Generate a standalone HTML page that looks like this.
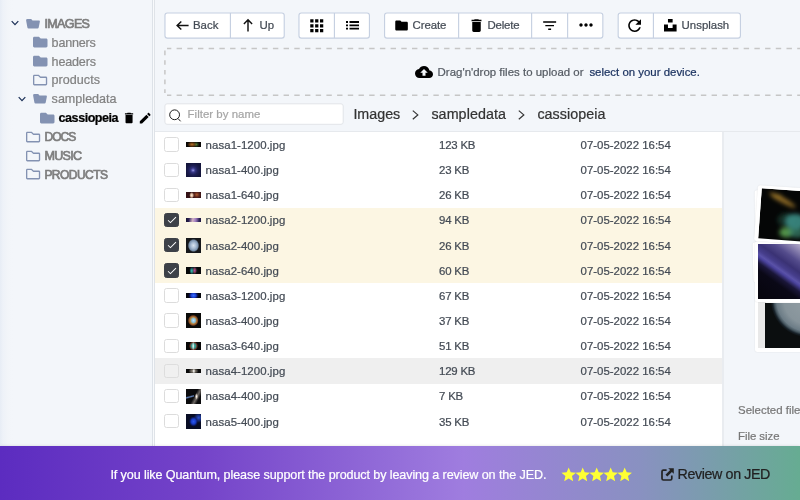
<!DOCTYPE html>
<html lang="en">
<head>
<meta charset="utf-8">
<title>Quantum Manager</title>
<style>
*{box-sizing:border-box;margin:0;padding:0}
html,body{width:800px;height:500px;overflow:hidden}
body{position:relative;background:#f3f6fa;font-family:"Liberation Sans",Arial,sans-serif;font-size:11.43px;color:#444b55}
.t{position:absolute;white-space:pre;line-height:20px;height:20px;-webkit-text-stroke:.22px}
svg{position:absolute;display:block;overflow:visible}
#root{position:absolute;left:0;top:0;width:800px;height:500px;will-change:transform}
#side{position:absolute;left:0;top:0;width:152.4px;height:446px;background:linear-gradient(90deg,#e7edf5 0,#eef2f8 3px,#f2f5f9 8px,#f3f6fa 13px)}
#split1{position:absolute;left:152.4px;top:0;width:2.6px;height:446px;background:#f8fafc;border-left:1px solid #dde2e8;border-right:.6px solid #dfe3e8}
.sl{color:#828282}
.sl.top{color:#7e7e7e;-webkit-text-stroke:.7px #7e7e7e}
.grp{position:absolute;top:12.4px;height:26px;background:#fff;border:1px solid #c6d0e1;border-radius:3px}
.sep{position:absolute;top:12.4px;width:1px;height:26px;background:#c6d0e1}
#list{position:absolute;left:155px;top:131px;width:567.4px;height:315px;background:#fff;border-top:1px solid #e8ebee}
.row{position:absolute;left:155px;width:567.4px;height:25.143px}
.row.sel{background:#fcf6e3}
.row.hov{background:#efefef}
.cb{position:absolute;left:9.4px;top:5.3px;width:14.3px;height:14.3px;border:1px solid #dcdcdc;border-radius:2.5px;background:#fff}
.sel .cb{background:#3d4148;border-color:#3d4148}
.hov .cb{background:#f0f0f0;border-color:#dddddd}
.th{position:absolute;left:31px;width:15px;overflow:hidden}
.th.w{top:10.1px;height:4.7px}
.th.s{top:5.2px;height:14.7px}
.row .t{top:2.85px}
.fn{left:50.6px;letter-spacing:.07px}
.fz{left:284px;letter-spacing:-.2px}
.fd{left:425.6px}
#split2{position:absolute;left:722.4px;top:132px;width:1.4px;height:314px;background:#e9ecf0}
#hline{position:absolute;left:155px;top:131px;width:645px;height:1px;background:#e6e9ed}
#banner{position:absolute;left:0;top:446px;width:800px;height:54px;background:linear-gradient(90deg,#5c2cc0 0%,#7443c9 25%,#9f7ddf 58%,#8991c1 80%,#66ac92 100%);box-shadow:0 0 3px rgba(0,0,0,.13)}
.card{position:absolute;background:#fff;border-radius:2px;box-shadow:0 0 1.5px rgba(0,0,0,.12)}
.card i{position:absolute;display:block}
</style>
</head>
<body>
<div id="root">
<div id="side"></div><div id="split1"></div>
<svg style="left:26px;top:18.7px" width="14" height="9.4" viewBox="0 0 14 9.4"><path fill="#8392b2" d="M1.5 0 H5.2 L6.5 1.5 H13 Q14.1 1.5 13.9 2.6 L12.7 8.4 Q12.5 9.4 11.5 9.4 H2.6 Q1.6 9.4 1.4 8.4 L.1 1.4 Q-.1 0 1.5 0Z"/></svg>
<svg style="left:11.2px;top:20.3px" width="8" height="6" viewBox="0 0 8 6"><path d="M.7 1.1 L4 4.7 L7.3 1.1" fill="none" stroke="#1c3158" stroke-width="1.2"/></svg>
<div class="t sl top" style="left:44.4px;top:13.84px;font-size:12.57px;;letter-spacing:-0.655px;">IMAGES</div>
<svg style="left:33px;top:35.36px" width="14.5" height="14.2" viewBox="0 0 512 512" preserveAspectRatio="none"><path fill="#8392b2" d="M464 128H272l-64-64H48C21.49 64 0 85.49 0 112v288c0 26.51 21.49 48 48 48h416c26.51 0 48-21.49 48-48V176c0-26.51-21.49-48-48-48z"/></svg>
<div class="t sl" style="left:51.6px;top:32.70px;font-size:12.57px;;letter-spacing:-0.201px;">banners</div>
<svg style="left:33px;top:54.21px" width="14.5" height="14.2" viewBox="0 0 512 512" preserveAspectRatio="none"><path fill="#8392b2" d="M464 128H272l-64-64H48C21.49 64 0 85.49 0 112v288c0 26.51 21.49 48 48 48h416c26.51 0 48-21.49 48-48V176c0-26.51-21.49-48-48-48z"/></svg>
<div class="t sl" style="left:51.6px;top:51.56px;font-size:12.57px;;letter-spacing:-0.168px;">headers</div>
<svg style="left:33px;top:73.07px" width="14.2" height="14.2" viewBox="0 0 512 512" preserveAspectRatio="none"><path fill="#8392b2" d="M464 128H272l-54.63-54.63c-6-6-14.14-9.37-22.63-9.37H48C21.49 64 0 85.49 0 112v288c0 26.51 21.49 48 48 48h416c26.51 0 48-21.49 48-48V176c0-26.51-21.49-48-48-48zm0 272H48V112h140.12l54.63 54.63c6 6 14.14 9.37 22.63 9.37H464v224z"/></svg>
<div class="t sl" style="left:51.6px;top:70.42px;font-size:12.57px;;letter-spacing:0.030px;">products</div>
<svg style="left:33px;top:94.13px" width="14" height="9.4" viewBox="0 0 14 9.4"><path fill="#8392b2" d="M1.5 0 H5.2 L6.5 1.5 H13 Q14.1 1.5 13.9 2.6 L12.7 8.4 Q12.5 9.4 11.5 9.4 H2.6 Q1.6 9.4 1.4 8.4 L.1 1.4 Q-.1 0 1.5 0Z"/></svg>
<svg style="left:18.4px;top:95.72800000000001px" width="8" height="6" viewBox="0 0 8 6"><path d="M.7 1.1 L4 4.7 L7.3 1.1" fill="none" stroke="#1c3158" stroke-width="1.2"/></svg>
<div class="t sl" style="left:51.6px;top:89.27px;font-size:12.57px;;letter-spacing:0.005px;">sampledata</div>
<svg style="left:40px;top:110.79px" width="14.5" height="14.2" viewBox="0 0 512 512" preserveAspectRatio="none"><path fill="#8392b2" d="M464 128H272l-64-64H48C21.49 64 0 85.49 0 112v288c0 26.51 21.49 48 48 48h416c26.51 0 48-21.49 48-48V176c0-26.51-21.49-48-48-48z"/></svg>
<div class="t " style="left:58.6px;top:108.13px;font-size:12.57px;font-weight:bold;color:#000;letter-spacing:-0.472px;">cassiopeia</div>
<svg style="left:26px;top:129.64px" width="14.2" height="14.2" viewBox="0 0 512 512" preserveAspectRatio="none"><path fill="#8392b2" d="M464 128H272l-54.63-54.63c-6-6-14.14-9.37-22.63-9.37H48C21.49 64 0 85.49 0 112v288c0 26.51 21.49 48 48 48h416c26.51 0 48-21.49 48-48V176c0-26.51-21.49-48-48-48zm0 272H48V112h140.12l54.63 54.63c6 6 14.14 9.37 22.63 9.37H464v224z"/></svg>
<div class="t sl top" style="left:44.4px;top:127.16px;font-size:12.067px;;letter-spacing:-0.938px;">DOCS</div>
<svg style="left:26px;top:148.5px" width="14.2" height="14.2" viewBox="0 0 512 512" preserveAspectRatio="none"><path fill="#8392b2" d="M464 128H272l-54.63-54.63c-6-6-14.14-9.37-22.63-9.37H48C21.49 64 0 85.49 0 112v288c0 26.51 21.49 48 48 48h416c26.51 0 48-21.49 48-48V176c0-26.51-21.49-48-48-48zm0 272H48V112h140.12l54.63 54.63c6 6 14.14 9.37 22.63 9.37H464v224z"/></svg>
<div class="t sl top" style="left:44.4px;top:145.84px;font-size:12.57px;;letter-spacing:-0.721px;">MUSIC</div>
<svg style="left:26px;top:167.36px" width="14.2" height="14.2" viewBox="0 0 512 512" preserveAspectRatio="none"><path fill="#8392b2" d="M464 128H272l-54.63-54.63c-6-6-14.14-9.37-22.63-9.37H48C21.49 64 0 85.49 0 112v288c0 26.51 21.49 48 48 48h416c26.51 0 48-21.49 48-48V176c0-26.51-21.49-48-48-48zm0 272H48V112h140.12l54.63 54.63c6 6 14.14 9.37 22.63 9.37H464v224z"/></svg>
<div class="t sl top" style="left:44.4px;top:164.87px;font-size:12.067px;;letter-spacing:-0.573px;">PRODUCTS</div>
<svg style="left:121.65px;top:110.94px" width="14.1" height="14.1" viewBox="0 0 24 24" ><path fill="#000" d="M6 19c0 1.1.9 2 2 2h8c1.1 0 2-.9 2-2V7H6v12zM19 4h-3.5l-1-1h-5l-1 1H5v2h14V4z"/></svg>
<svg style="left:137.8px;top:110.69px" width="14.4" height="14.4" viewBox="0 0 24 24" ><path fill="#000" d="M3 17.25V21h3.75L17.81 9.94l-3.75-3.75L3 17.25zM20.71 7.04c.39-.39.39-1.02 0-1.41l-2.34-2.34c-.39-.39-1.02-.39-1.41 0l-1.83 1.83 3.75 3.75 1.83-1.83z"/></svg>
<svg style="left:0;top:0" width="800" height="45"><rect x="164.97" y="12.97" width="119.26" height="25.1" rx="2.4" fill="#fff" stroke="#c6d0e1" stroke-width="1.14"/></svg>
<svg style="left:0;top:0" width="800" height="45"><path d="M230.42 12.97 V38.07" fill="none" stroke="#c6d0e1" stroke-width="1.14"/></svg>
<svg style="left:0;top:0" width="800" height="45"><rect x="298.97" y="12.97" width="70.46" height="25.1" rx="2.4" fill="#fff" stroke="#c6d0e1" stroke-width="1.14"/></svg>
<svg style="left:0;top:0" width="800" height="45"><path d="M334.42 12.97 V38.07" fill="none" stroke="#c6d0e1" stroke-width="1.14"/></svg>
<svg style="left:0;top:0" width="800" height="45"><rect x="384.57" y="12.97" width="218.26" height="25.1" rx="2.4" fill="#fff" stroke="#c6d0e1" stroke-width="1.14"/></svg>
<svg style="left:0;top:0" width="800" height="45"><path d="M458.62 12.97 V38.07" fill="none" stroke="#c6d0e1" stroke-width="1.14"/></svg>
<svg style="left:0;top:0" width="800" height="45"><path d="M531.62 12.97 V38.07" fill="none" stroke="#c6d0e1" stroke-width="1.14"/></svg>
<svg style="left:0;top:0" width="800" height="45"><path d="M567.62 12.97 V38.07" fill="none" stroke="#c6d0e1" stroke-width="1.14"/></svg>
<svg style="left:0;top:0" width="800" height="45"><rect x="618.17" y="12.97" width="122.26" height="25.1" rx="2.4" fill="#fff" stroke="#c6d0e1" stroke-width="1.14"/></svg>
<svg style="left:0;top:0" width="800" height="45"><path d="M653.42 12.97 V38.07" fill="none" stroke="#c6d0e1" stroke-width="1.14"/></svg>
<svg style="left:0;top:0" width="800" height="45"><path d="M188.6 25.5 H177.2 M181.3 21.4 L177.1 25.5 L181.3 29.6" fill="none" stroke="#111" stroke-width="1.45"/></svg>
<div class="t " style="left:193px;top:15.04px;font-size:11.43px;;">Back</div>
<svg style="left:0;top:0" width="800" height="45"><path d="M248 31.4 V19.9 M243.9 24 L248 19.8 L252.1 24" fill="none" stroke="#111" stroke-width="1.45"/></svg>
<div class="t " style="left:259.6px;top:15.04px;font-size:11.43px;;">Up</div>
<svg style="left:306.75px;top:15.55px" width="19.5" height="19.5" viewBox="0 0 24 24" ><path fill="#000" d="M4 8h4V4H4v4zm6 12h4v-4h-4v4zm-6 0h4v-4H4v4zm0-6h4v-4H4v4zm6 0h4v-4h-4v4zm6-10v4h4V4h-4zm-6 4h4V4h-4v4zm6 6h4v-4h-4v4zm0 6h4v-4h-4v4z"/></svg>
<svg style="left:0;top:0" width="800" height="45"><path d="M346 21.1h2v1.8h-2zM346 24.45h2v1.8h-2zM346 27.8h2v1.8h-2zM349.5 21.1h9.5v1.8h-9.5zM349.5 24.45h9.5v1.8h-9.5zM349.5 27.8h9.5v1.8h-9.5z" fill="#000"/></svg>
<svg style="left:394.15px;top:17.65px" width="15.1" height="15.1" viewBox="0 0 24 24" ><path fill="#000" d="M10 4H4c-1.1 0-1.99.9-1.99 2L2 18c0 1.1.9 2 2 2h16c1.1 0 2-.9 2-2V8c0-1.1-.9-2-2-2h-8l-2-2z"/></svg>
<div class="t " style="left:412.6px;top:15.04px;font-size:11.43px;letter-spacing:-.08px;">Create</div>
<svg style="left:468.0px;top:16.7px" width="17" height="17" viewBox="0 0 24 24" ><path fill="#000" d="M6 19c0 1.1.9 2 2 2h8c1.1 0 2-.9 2-2V7H6v12zM19 4h-3.5l-1-1h-5l-1 1H5v2h14V4z"/></svg>
<div class="t " style="left:487.4px;top:15.04px;font-size:11.43px;letter-spacing:-.14px;">Delete</div>
<svg style="left:540.85px;top:16.55px" width="17.3" height="17.3" viewBox="0 0 24 24" ><path fill="#000" d="M10 18h4v-2h-4v2zM3 6v2h18V6H3zm3 7h12v-2H6v2z"/></svg>
<svg style="left:575.7px;top:15.1px" width="20" height="20" viewBox="0 0 24 24" ><path fill="#000" d="M6 10c-1.1 0-2 .9-2 2s.9 2 2 2 2-.9 2-2-.9-2-2-2zm12 0c-1.1 0-2 .9-2 2s.9 2 2 2 2-.9 2-2-.9-2-2-2zm-6 0c-1.1 0-2 .9-2 2s.9 2 2 2 2-.9 2-2-.9-2-2-2z"/></svg>
<svg style="left:625.4px;top:15.5px" width="19.2" height="19.2" viewBox="0 0 24 24" ><path fill="#000" d="M17.65 6.35C16.2 4.9 14.21 4 12 4c-4.42 0-7.99 3.58-7.99 8s3.57 8 7.99 8c3.73 0 6.84-2.55 7.73-6h-2.08c-.82 2.33-3.04 4-5.65 4-3.31 0-6-2.69-6-6s2.69-6 6-6c1.66 0 3.14.69 4.22 1.78L13 11h7V4l-2.35 2.35z"/></svg>
<svg style="left:664.4px;top:18.1px" width="12.6" height="14.4" viewBox="0 0 448 512" ><path fill="#000" d="M448 230.17V480H0V230.17h141.13V355.09H306.87V230.17zM306.87 32H141.13V156.91H306.87z"/></svg>
<div class="t " style="left:681.6px;top:15.04px;font-size:11.43px;;">Unsplash</div>
<svg style="left:0;top:0" width="800" height="100"><g fill="none" stroke="#c6c6c6" stroke-width="1.5"><path d="M167 48.5 H800 M167 95.2 H800" stroke-dasharray="5.4 5.3" stroke-dashoffset="1.1"/><path d="M164.9 50.6 V93" stroke-dasharray="4.6 5.06"/></g></svg>
<svg style="left:415.2px;top:62.9px" width="18" height="18" viewBox="0 0 24 24" ><path fill="#000" d="M19.35 10.04C18.67 6.59 15.64 4 12 4 9.11 4 6.6 5.64 5.35 8.04 2.34 8.36 0 10.91 0 14c0 3.31 2.69 6 6 6h13c2.76 0 5-2.24 5-5 0-2.64-2.05-4.78-4.65-4.96zM14 13v4h-4v-4H7l5-5 5 5h-3z"/></svg>
<div class="t " style="left:437.6px;top:62.04px;font-size:11.43px;color:#555b63;letter-spacing:.02px;">Drag'n'drop files to upload or</div>
<div class="t " style="left:589.4px;top:62.04px;font-size:11.43px;color:#1d3461;">select on your device.</div>
<svg style="left:0;top:0" width="800" height="130"><rect x="164.9" y="103.8" width="178.3" height="20.5" rx="2.2" fill="#fff" stroke="#e1e4e8" stroke-width="1"/></svg>
<svg style="left:168.6px;top:109px" width="13" height="13" viewBox="0 0 13 13"><circle cx="5.6" cy="5.8" r="4.9" fill="none" stroke="#111" stroke-width=".95"/><path d="M9.1 9.6 L11.6 12.3" stroke="#111" stroke-width=".95" fill="none"/></svg>
<div class="t " style="left:187.6px;top:104.04px;font-size:11.43px;color:#a6a6a6;letter-spacing:.03px;">Filter by name</div>
<div class="t " style="left:353.4px;top:104.05px;font-size:14.29px;color:#333;">Images</div>
<div class="t " style="left:431.4px;top:104.05px;font-size:14.29px;color:#333;letter-spacing:.08px;">sampledata</div>
<div class="t " style="left:537.4px;top:104.05px;font-size:14.29px;color:#333;letter-spacing:.05px;">cassiopeia</div>
<svg style="left:412.2px;top:109.7px" width="7" height="10" viewBox="0 0 7 10"><path d="M.8 .6 L5.8 4.9 L.8 9.2" fill="none" stroke="#333" stroke-width="1.2"/></svg>
<svg style="left:518.2px;top:109.7px" width="7" height="10" viewBox="0 0 7 10"><path d="M.8 .6 L5.8 4.9 L.8 9.2" fill="none" stroke="#333" stroke-width="1.2"/></svg>
<div id="list"></div>
<div class="row" style="top:132.20px"><div class="cb"></div><div class="th w" style="background:radial-gradient(ellipse 32% 60% at 40% 50%,#b87024 0%,rgba(140,80,24,.7) 50%,rgba(0,0,0,0) 100%),radial-gradient(ellipse 22% 60% at 68% 50%,#5a8a3a 0%,rgba(60,90,40,.6) 50%,rgba(0,0,0,0) 100%),#0a0806"></div><div class="t fn">nasa1-1200.jpg</div><div class="t fz">123 KB</div><div class="t fd">07-05-2022 16:54</div></div>
<div class="row" style="top:157.34px"><div class="cb"></div><div class="th s" style="background:radial-gradient(circle at 47% 52%,#c8c8f8 0%,rgba(120,120,215,.85) 7%,rgba(70,70,170,.6) 22%,rgba(45,45,125,.4) 42%,rgba(0,0,0,0) 70%),#14153c"></div><div class="t fn">nasa1-400.jpg</div><div class="t fz">23 KB</div><div class="t fd">07-05-2022 16:54</div></div>
<div class="row" style="top:182.49px"><div class="cb"></div><div class="th" style="top:9.2px;height:6.6px;background:radial-gradient(ellipse 16% 55% at 38% 55%,#fff4e0 0%,rgba(230,190,160,.9) 50%,rgba(0,0,0,0) 100%),radial-gradient(ellipse 30% 70% at 72% 45%,#b05a30 0%,rgba(120,50,30,.6) 55%,rgba(0,0,0,0) 100%),#341216"></div><div class="t fn">nasa1-640.jpg</div><div class="t fz">26 KB</div><div class="t fd">07-05-2022 16:54</div></div>
<div class="row sel" style="top:207.63px"><div class="cb"></div><svg style="left:10.6px;top:6.7px" width="11.8" height="11.8" viewBox="0 0 24 24"><path fill="#fff" d="M9 16.17L4.83 12l-1.42 1.41L9 19 21 7l-1.41-1.41z"/></svg><div class="th w" style="background:linear-gradient(100deg,rgba(0,0,0,0) 20%,rgba(224,190,200,.9) 45%,rgba(190,150,210,.8) 60%,rgba(0,0,0,0) 85%),linear-gradient(90deg,#141030,#3a2c68 30%,#5a4890 60%,#1c1640)"></div><div class="t fn">nasa2-1200.jpg</div><div class="t fz">94 KB</div><div class="t fd">07-05-2022 16:54</div></div>
<div class="row sel" style="top:232.77px"><div class="cb"></div><svg style="left:10.6px;top:6.7px" width="11.8" height="11.8" viewBox="0 0 24 24"><path fill="#fff" d="M9 16.17L4.83 12l-1.42 1.41L9 19 21 7l-1.41-1.41z"/></svg><div class="th s" style="background:radial-gradient(ellipse 38% 44% at 50% 50%,#d8e4f0 0%,#a8bcd4 45%,#7890ac 80%,rgba(0,0,0,0) 100%),#15171a;transform:none"></div><div class="t fn">nasa2-400.jpg</div><div class="t fz">26 KB</div><div class="t fd">07-05-2022 16:54</div></div>
<div class="row sel" style="top:257.91px"><div class="cb"></div><svg style="left:10.6px;top:6.7px" width="11.8" height="11.8" viewBox="0 0 24 24"><path fill="#fff" d="M9 16.17L4.83 12l-1.42 1.41L9 19 21 7l-1.41-1.41z"/></svg><div class="th" style="top:8.9px;height:7.3px;background:radial-gradient(ellipse 14% 50% at 38% 55%,#40c0b0 0%,rgba(40,160,150,.7) 50%,rgba(0,0,0,0) 100%),radial-gradient(ellipse 14% 50% at 58% 50%,#a050c0 0%,rgba(200,60,80,.6) 55%,rgba(0,0,0,0) 100%),radial-gradient(ellipse 30% 70% at 50% 50%,#305070 0%,rgba(0,0,0,0) 100%),#07080a"></div><div class="t fn">nasa2-640.jpg</div><div class="t fz">60 KB</div><div class="t fd">07-05-2022 16:54</div></div>
<div class="row" style="top:283.06px"><div class="cb"></div><div class="th w" style="background:radial-gradient(ellipse 36% 90% at 50% 50%,#3a6cff 0%,#1a40d0 45%,rgba(10,20,110,.7) 75%,rgba(0,0,0,0) 100%),#04050c"></div><div class="t fn">nasa3-1200.jpg</div><div class="t fz">67 KB</div><div class="t fd">07-05-2022 16:54</div></div>
<div class="row" style="top:308.20px"><div class="cb"></div><div class="th s" style="background:radial-gradient(ellipse 20% 22% at 50% 50%,#c0e4f8 0%,#88c0e0 60%,rgba(0,0,0,0) 100%),radial-gradient(ellipse 36% 38% at 48% 50%,#88b070 0%,#b88c48 55%,#8a4c24 80%,rgba(0,0,0,0) 100%),#0a0a08"></div><div class="t fn">nasa3-400.jpg</div><div class="t fz">37 KB</div><div class="t fd">07-05-2022 16:54</div></div>
<div class="row" style="top:333.34px"><div class="cb"></div><div class="th" style="top:8.9px;height:7.3px;background:radial-gradient(ellipse 8% 60% at 48% 50%,#ffffff 0%,rgba(255,255,255,0) 100%),radial-gradient(ellipse 30% 60% at 50% 50%,#58c0a8 0%,#3a9088 50%,rgba(200,80,50,.5) 80%,rgba(0,0,0,0) 100%),#070707"></div><div class="t fn">nasa3-640.jpg</div><div class="t fz">51 KB</div><div class="t fd">07-05-2022 16:54</div></div>
<div class="row hov" style="top:358.49px"><div class="cb"></div><div class="th w" style="background:radial-gradient(ellipse 10% 70% at 52% 50%,#fff 0%,rgba(255,255,255,0) 100%),radial-gradient(ellipse 34% 80% at 50% 50%,#b0a898 0%,#6a645c 50%,rgba(0,0,0,0) 100%),#0a0a0a"></div><div class="t fn">nasa4-1200.jpg</div><div class="t fz">129 KB</div><div class="t fd">07-05-2022 16:54</div></div>
<div class="row" style="top:383.63px"><div class="cb"></div><div class="th s" style="background:radial-gradient(ellipse 10% 22% at 70% 50%,#fff8ee 0%,rgba(230,215,200,.8) 50%,rgba(0,0,0,0) 100%),linear-gradient(118deg,rgba(0,0,0,0) 52%,rgba(190,180,170,.55) 66%,rgba(0,0,0,0) 80%),linear-gradient(165deg,rgba(0,0,0,0) 44%,rgba(120,160,230,.8) 52%,rgba(0,0,0,0) 60%) 0 0/55% 100% no-repeat,#0b0b0d"></div><div class="t fn">nasa4-400.jpg</div><div class="t fz">7 KB</div><div class="t fd">07-05-2022 16:54</div></div>
<div class="row" style="top:408.77px"><div class="cb"></div><div class="th s" style="background:radial-gradient(ellipse 30% 34% at 50% 50%,#2c58f0 0%,#183cc8 50%,rgba(14,34,140,.55) 80%,rgba(0,0,0,0) 100%),radial-gradient(circle at 85% 25%,#2a50d0 0%,rgba(0,0,0,0) 30%),#080c24"></div><div class="t fn">nasa5-400.jpg</div><div class="t fz">35 KB</div><div class="t fd">07-05-2022 16:54</div></div>
<div id="split2"></div><div id="hline"></div>
<div class="card" style="left:752.9px;top:242px;width:20px;height:40px;transform:rotate(-1.5deg)"></div>
<div class="card" style="left:754.6px;top:190px;width:20px;height:50px;transform:rotate(-1deg)"></div>
<div class="card" style="left:754.5px;top:296px;width:60px;height:55.8px;border-radius:2.5px"><i style="left:3.8px;top:4px;width:8px;height:48.2px;background:#e9e9e9"></i><i style="left:10.2px;top:7.2px;width:50px;height:45px;background:radial-gradient(circle 38px at 43.5px -3.5px,#939fa5 0%,#87949b 65%,#6c7c86 84%,#46565f 90%,#18222a 95%,#0b0e0f 100%)"></i></div>
<div class="card" style="left:754.5px;top:240.6px;width:60px;height:61.2px;border-radius:2.5px"><i style="left:3.5px;top:3.4px;width:42.1px;height:54.7px;background:linear-gradient(35.5deg,#06050c 0%,#0a0816 34%,#1a1638 43%,#4a429c 50%,#5a52a8 53%,#463e8c 58%,#3a3274 66%,#544c8c 78%,#8880ae 90%,#b4acca 100%)"></i></div>
<div class="card" style="left:757.8px;top:185.2px;width:60px;height:56.2px;transform:rotate(4.1deg);transform-origin:0 0;border-radius:2.5px"><svg style="left:3.6px;top:3.4px;overflow:hidden" width="60" height="50.2" viewBox="0 0 60 50.2"><defs><filter id="nb" x="-50%" y="-50%" width="200%" height="200%"><feGaussianBlur stdDeviation="2.2"/></filter></defs><rect width="60" height="50.2" fill="#050606"/><g filter="url(#nb)"><ellipse cx="21.4" cy="10.2" rx="15" ry="2.6" transform="rotate(25 21.4 10.2)" fill="#a87c2a" opacity=".85"/><ellipse cx="16" cy="7" rx="5" ry="2" fill="#b08830" opacity=".6"/><ellipse cx="27" cy="30" rx="9" ry="7" fill="#1c3c30" opacity=".8"/><ellipse cx="36" cy="31" rx="10" ry="8" fill="#3c8c84" opacity=".9"/><ellipse cx="27.5" cy="42.5" rx="7" ry="5" fill="#5aa050" opacity=".9"/><ellipse cx="38" cy="42" rx="8" ry="5" fill="#3a8870" opacity=".7"/></g></svg></div>
<div class="t " style="left:738.1px;top:400.04px;font-size:11.43px;color:#777;">Selected file(s)</div>
<div class="t " style="left:738.1px;top:426.04px;font-size:11.43px;color:#777;letter-spacing:-.06px;">File size</div>
<div id="banner"></div>
<div class="t " style="left:110.4px;top:464.64px;font-size:12.57px;color:#fff;letter-spacing:-.095px;">If you like Quantum, please support the product by leaving a review on the JED.</div>
<svg style="left:559.55px;top:465.6px" width="17.4" height="17.4" viewBox="0 0 24 24" ><path fill="#ffff33" d="M12 17.27L18.18 21l-1.64-7.03L22 9.24l-7.19-.61L12 2 9.19 8.63 2 9.24l5.46 4.73L5.82 21z"/></svg>
<svg style="left:573.75px;top:465.6px" width="17.4" height="17.4" viewBox="0 0 24 24" ><path fill="#ffff33" d="M12 17.27L18.18 21l-1.64-7.03L22 9.24l-7.19-.61L12 2 9.19 8.63 2 9.24l5.46 4.73L5.82 21z"/></svg>
<svg style="left:587.95px;top:465.6px" width="17.4" height="17.4" viewBox="0 0 24 24" ><path fill="#ffff33" d="M12 17.27L18.18 21l-1.64-7.03L22 9.24l-7.19-.61L12 2 9.19 8.63 2 9.24l5.46 4.73L5.82 21z"/></svg>
<svg style="left:602.15px;top:465.6px" width="17.4" height="17.4" viewBox="0 0 24 24" ><path fill="#ffff33" d="M12 17.27L18.18 21l-1.64-7.03L22 9.24l-7.19-.61L12 2 9.19 8.63 2 9.24l5.46 4.73L5.82 21z"/></svg>
<svg style="left:616.35px;top:465.6px" width="17.4" height="17.4" viewBox="0 0 24 24" ><path fill="#ffff33" d="M12 17.27L18.18 21l-1.64-7.03L22 9.24l-7.19-.61L12 2 9.19 8.63 2 9.24l5.46 4.73L5.82 21z"/></svg>
<svg style="left:661.4px;top:468px" width="13" height="13" viewBox="0 0 13 13"><path d="M5.6 2.2 H2.4 Q1 2.2 1 3.6 V10.6 Q1 12 2.4 12 H9.4 Q10.8 12 10.8 10.6 V7.6" fill="none" stroke="#222" stroke-width="1.7"/><path d="M7.2 .2 H12.8 V5.8 L10.9 3.9 L6.3 8.5 L4.5 6.7 L9.1 2.1 Z" fill="#222"/></svg>
<div class="t " style="left:677.6px;top:464.05px;font-size:14.29px;color:#222;letter-spacing:-.4px;">Review on JED</div>
</div>
</body>
</html>
